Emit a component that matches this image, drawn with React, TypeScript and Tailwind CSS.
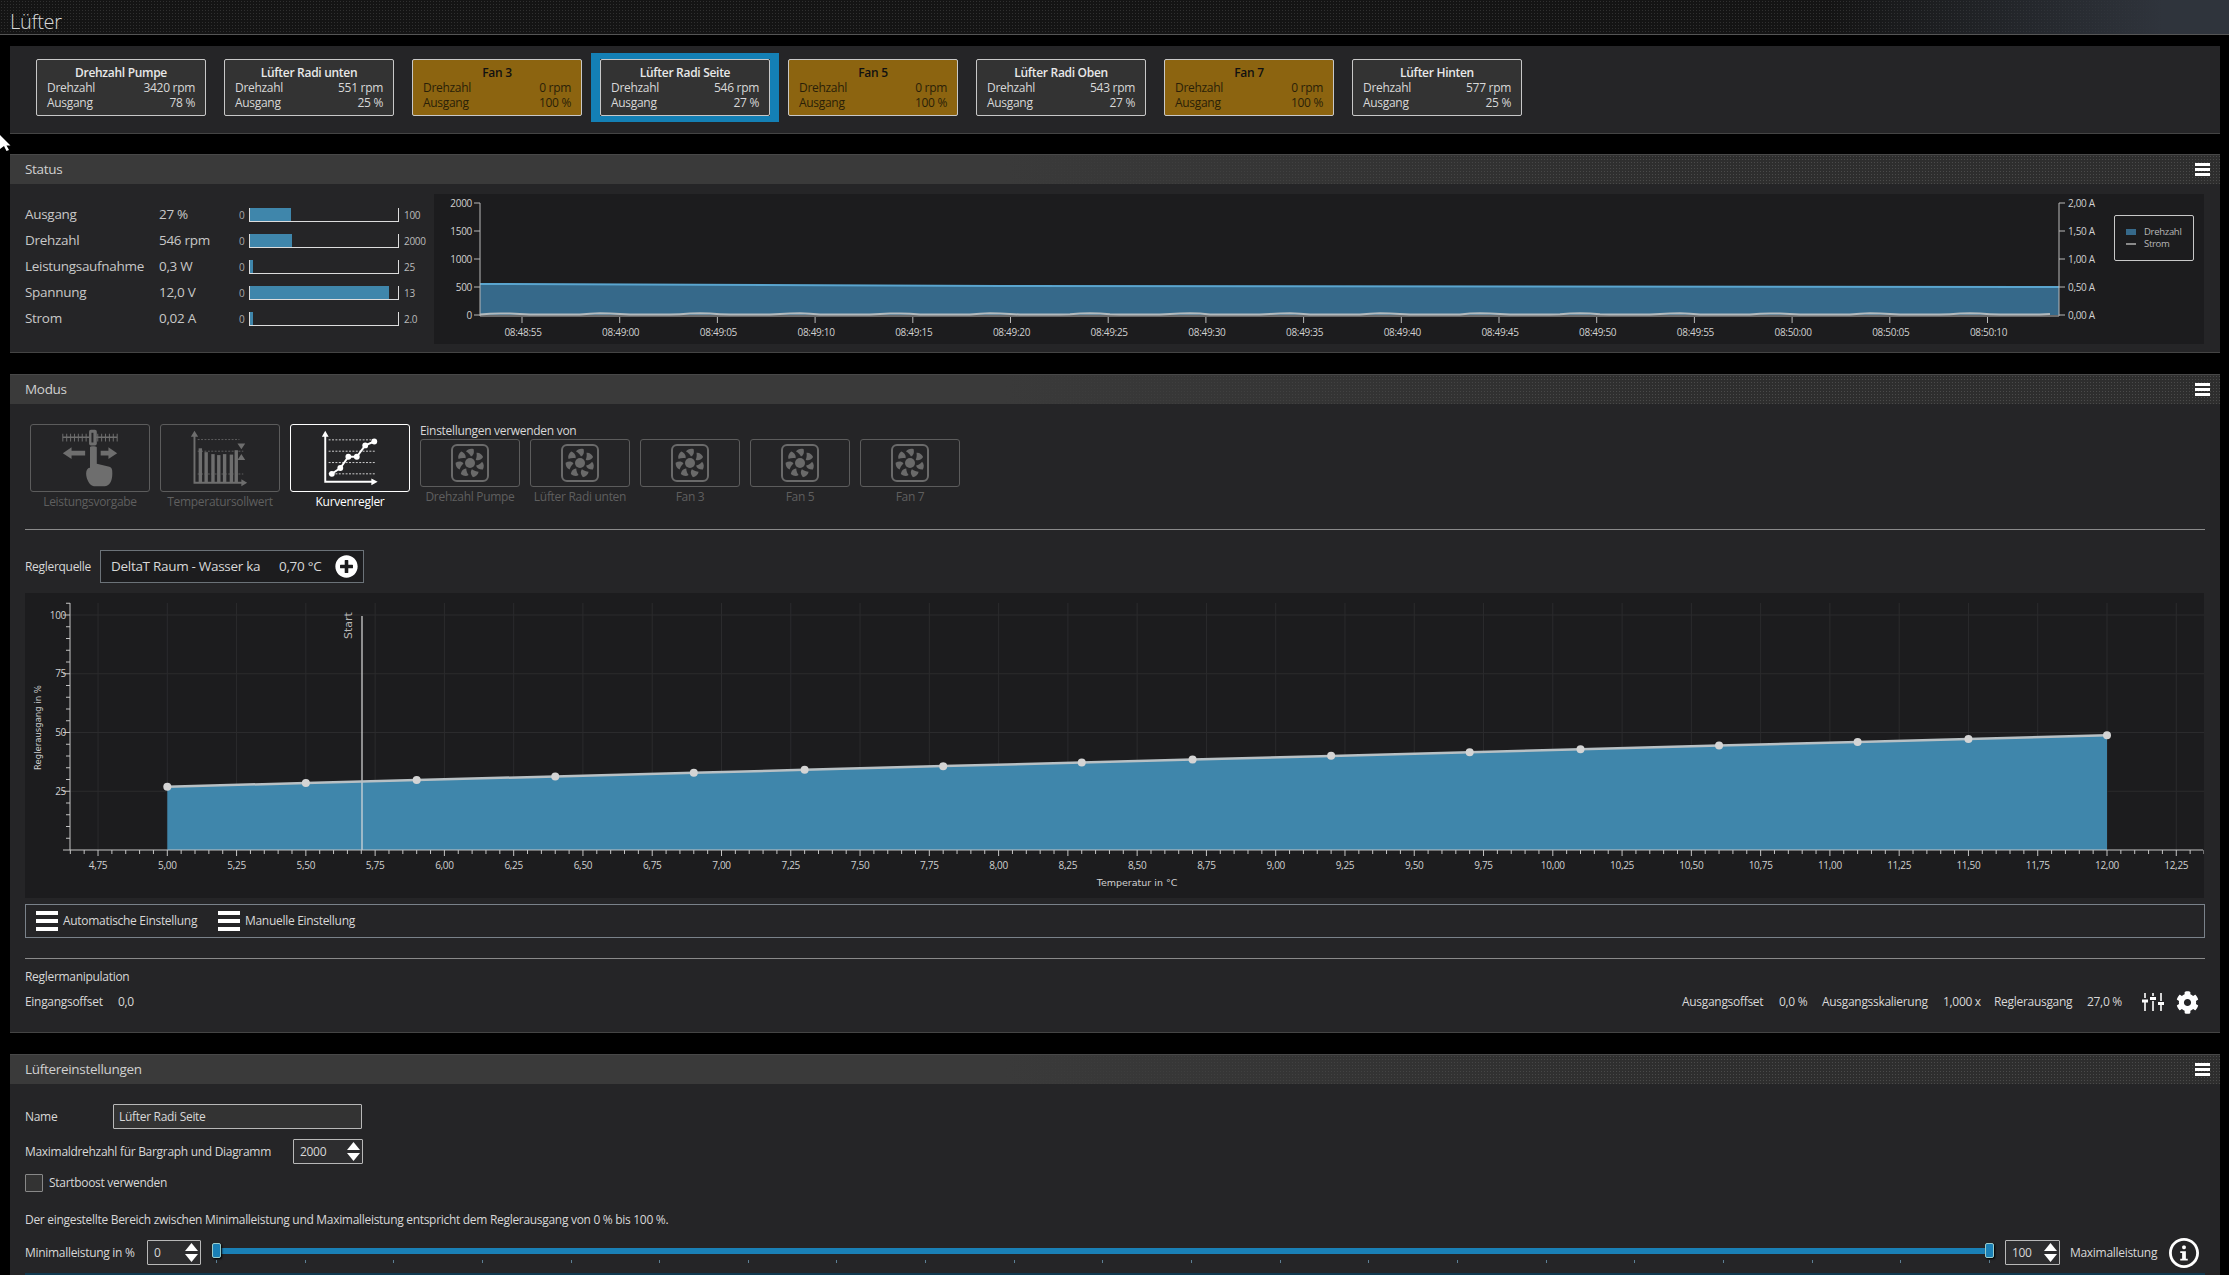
import { FaCog, FaPlusCircle } from 'react-icons/fa';
import { ImInfo } from 'react-icons/im';
import type { ReactNode } from 'react';

const cards = [
  { name: 'Drehzahl Pumpe', rpm: 3420, out: 78 },
  { name: 'Lüfter Radi unten', rpm: 551, out: 25 },
  { name: 'Fan 3', rpm: 0, out: 100, warn: true },
  { name: 'Lüfter Radi Seite', rpm: 546, out: 27, active: true },
  { name: 'Fan 5', rpm: 0, out: 100, warn: true },
  { name: 'Lüfter Radi Oben', rpm: 543, out: 27 },
  { name: 'Fan 7', rpm: 0, out: 100, warn: true },
  { name: 'Lüfter Hinten', rpm: 577, out: 25 },
];

const statusRows = [
  { label: 'Ausgang', value: '27 %', max: '100', fill: 41 },
  { label: 'Drehzahl', value: '546 rpm', max: '2000', fill: 42 },
  { label: 'Leistungsaufnahme', value: '0,3 W', max: '25', fill: 3 },
  { label: 'Spannung', value: '12,0 V', max: '13', fill: 139 },
  { label: 'Strom', value: '0,02 A', max: '2.0', fill: 3 },
];

const timeLabels = [
  '08:48:55', '08:49:00', '08:49:05', '08:49:10', '08:49:15', '08:49:20', '08:49:25', '08:49:30',
  '08:49:35', '08:49:40', '08:49:45', '08:49:50', '08:49:55', '08:50:00', '08:50:05', '08:50:10',
];

const curveX = [5, 5.5, 5.9, 6.4, 6.9, 7.3, 7.8, 8.3, 8.7, 9.2, 9.7, 10.1, 10.6, 11.1, 11.5, 12];
const tempX = (v: number) => 167.3 + (v - 5) * 277.1;
const tempY = (v: number) => 786.7 - (v - 5) * 7.34;

function Bars({ big }: { big?: boolean }) {
  if (big) {
    return (
      <div className="flex h-[20px] w-[22px] flex-col justify-between">
        <div className="h-[4px] bg-white" />
        <div className="h-[4px] bg-white" />
        <div className="h-[4px] bg-white" />
      </div>
    );
  }
  return (
    <div className="flex h-[13px] w-[15px] flex-col justify-between">
      <div className="h-[3px] bg-white" />
      <div className="h-[3px] bg-white" />
      <div className="h-[3px] bg-white" />
    </div>
  );
}

function Panel({ title, className, children }: { title: string; className: string; children: ReactNode }) {
  return (
    <section className={`ml-[10px] w-[2210px] shrink-0 overflow-hidden border-b border-[#444] bg-[#252527] ${className}`}>
      <div className="flex h-[30px] items-center justify-between border-t border-[#484848] pl-[15px] pr-[10px] text-[13.5px] text-[#d0d0d0] [background-image:linear-gradient(90deg,#3a3a3a_45%,transparent_75%),radial-gradient(circle,#4a4a4a_1px,transparent_1px)] [background-size:100%_100%,3px_3px] bg-[#2e2e2e]">
        <span>{title}</span>
        <Bars />
      </div>
      {children}
    </section>
  );
}

function FanCard({ name, rpm, out, warn, active }: { name: string; rpm: number; out: number; warn?: boolean; active?: boolean }) {
  return (
    <div className={`relative flex h-[57px] w-[170px] flex-col rounded-[2px] border border-[#c8c8c8] px-[10px] pt-[5px] text-[12px] leading-[15px] ${warn ? 'bg-[#8c6410] text-[#2a1f08]' : 'bg-[#333] text-[#d8d8d8]'}`}>
      {active && <div className="absolute -inset-x-[10px] -inset-y-[7px] border-x-[9px] border-y-[6px] border-[#1480b5]" />}
      <div className={`text-center font-semibold ${warn ? 'text-[#111]' : 'text-[#e8e8e8]'}`}>{name}</div>
      <div className="flex justify-between">
        <span>Drehzahl</span>
        <span>{rpm} rpm</span>
      </div>
      <div className="flex justify-between">
        <span>Ausgang</span>
        <span>{out} %</span>
      </div>
    </div>
  );
}

function StatusRow({ label, value, max, fill }: { label: string; value: string; max: string; fill: number }) {
  return (
    <div className="flex h-[26px] items-center text-[13.5px] text-[#c8c8c8]">
      <span className="w-[134px] whitespace-nowrap pb-[2px]">{label}</span>
      <span className="w-[80px] whitespace-nowrap pb-[2px]">{value}</span>
      <span className="w-[10px] text-[10px] text-[#aaa]">0</span>
      <div className="h-[14px] w-[150px] border-x border-b border-[#ddd]">
        <div className="h-full bg-[#3f86ab]" style={{ width: fill }} />
      </div>
      <span className="ml-[5px] text-[10px] text-[#bbb]">{max}</span>
    </div>
  );
}

function StatusChart() {
  const wave = Array.from({ length: 158 }, (_, i) => {
    const x = 480 + i * 10;
    return `${x},${(314.6 - Math.max(0, Math.sin((i / 9.77) * Math.PI * 2)) * 1.3).toFixed(1)}`;
  }).join(' ');
  return (
    <div className="relative h-[150px] w-[1770px] bg-[#1c1c1e]">
      <svg viewBox="434 194 1770 150" className="absolute inset-0 h-full w-full">
        <path d="M480 284 L1000 286 L2059 287 L2059 315 L480 315 Z" fill="#36698a" />
        <path d="M480 284 L1000 286 L2059 287" fill="none" stroke="#5aa5cf" strokeWidth="2" />
        <polyline points={wave} fill="none" stroke="#b2babe" strokeWidth="2" />
        <path d="M480 203 V316 H2059 V203" fill="none" stroke="#b8b8b8" strokeWidth="1" />
        {[2000, 1500, 1000, 500, 0].map((v, i) => (
          <g key={v}>
            <line x1="474" x2="480" y1={203 + i * 28} y2={203 + i * 28} stroke="#b8b8b8" />
            <text x="472" y={206.5 + i * 28} textAnchor="end" fontSize="10" fill="#d0d0d0">{v}</text>
            <line x1="2059" x2="2065" y1={203 + i * 28} y2={203 + i * 28} stroke="#b8b8b8" />
            <text x="2068" y={206.5 + i * 28} fontSize="10" fill="#d0d0d0">{['2,00', '1,50', '1,00', '0,50', '0,00'][i]} A</text>
          </g>
        ))}
        {timeLabels.map((t, i) => (
          <g key={t}>
            <line x1={522 + i * 97.7} x2={522 + i * 97.7} y1="317" y2="323" stroke="#b8b8b8" />
            <text x={523 + i * 97.7} y="335.5" textAnchor="middle" fontSize="10" fill="#d0d0d0">{t}</text>
          </g>
        ))}
      </svg>
      <div className="absolute left-[1680px] top-[21px] h-[46px] w-[80px] rounded-[2px] border border-[#c8c8c8] pl-[11px] pt-[10px] text-[9.5px] leading-[12px] text-[#b8b8b8]">
        <div className="flex items-center gap-[8px]">
          <div className="h-[6px] w-[10px] bg-[#36698a]" />
          <span>Drehzahl</span>
        </div>
        <div className="flex items-center gap-[8px]">
          <div className="h-[2px] w-[10px] bg-[#8a8a8a]" />
          <span>Strom</span>
        </div>
      </div>
    </div>
  );
}

function CurveChart() {
  const line = curveX.map((v) => `${tempX(v).toFixed(1)},${tempY(v).toFixed(1)}`).join(' ');
  const xTicks = Array.from({ length: 155 }, (_, i) => ({ v: 4.65 + i * 0.05, major: (i - 2) % 5 === 0 }));
  const yTicks = Array.from({ length: 22 }, (_, i) => i * 5);
  return (
    <svg viewBox="25 593 2179 305" className="ml-[15px] mt-[10px] block h-[305px] w-[2179px] shrink-0 bg-[#1c1c1e]">
      {xTicks.filter((t) => t.major).map((t) => (
        <line key={t.v} x1={tempX(t.v)} x2={tempX(t.v)} y1="603" y2="850" stroke="#2b2b2d" />
      ))}
      {[25, 50, 75, 100].map((v) => (
        <line key={v} x1="70" x2="2204" y1={850 - v * 2.35} y2={850 - v * 2.35} stroke="#2b2b2d" />
      ))}
      <polygon points={`${line} 2107,850 167.3,850`} fill="#3f86ab" />
      <line x1="362" x2="362" y1="616" y2="850" stroke="#dcdcdc" strokeWidth="1.2" />
      <polyline points={line} fill="none" stroke="#b8c0c4" strokeWidth="2.5" />
      {curveX.map((v) => (
        <circle key={v} cx={tempX(v)} cy={tempY(v)} r="4" fill="#d4d4d4" />
      ))}
      <path d="M70 603 V850 H2203" fill="none" stroke="#c4c4c4" />
      {yTicks.map((v) => (
        <line key={v} x1={v % 25 === 0 ? 63 : 66} x2="70" y1={850 - v * 2.35} y2={850 - v * 2.35} stroke="#c4c4c4" />
      ))}
      {[100, 75, 50, 25].map((v) => (
        <text key={v} x="66" y={853.5 - v * 2.35} textAnchor="end" fontSize="10" fill="#d0d0d0">{v}</text>
      ))}
      {xTicks.map((t) => (
        <line key={t.v} x1={tempX(t.v)} x2={tempX(t.v)} y1="850" y2={t.major ? 856 : 854} stroke="#c4c4c4" />
      ))}
      {xTicks.filter((t) => t.major).map((t) => (
        <text key={t.v} x={tempX(t.v)} y="868.5" textAnchor="middle" fontSize="10" fill="#d0d0d0">{t.v.toFixed(2).replace('.', ',')}</text>
      ))}
      <text x="1137" y="886" textAnchor="middle" fontSize="9.5" fill="#d0d0d0" className="[font-family:'DejaVu_Sans',sans-serif] tracking-normal">Temperatur in °C</text>
      <text transform="translate(40.5 770) rotate(-90)" fontSize="8.5" fill="#d0d0d0" className="[font-family:'DejaVu_Sans',sans-serif] tracking-normal">Reglerausgang in %</text>
      <text transform="translate(352 639) rotate(-90)" fontSize="11" fill="#b8b8b8" className="[font-family:'DejaVu_Sans',sans-serif] tracking-normal">Start</text>
    </svg>
  );
}

function PowerIcon() {
  const ticks = Array.from({ length: 15 }, (_, i) => 32 + i * 4);
  return (
    <svg viewBox="0 0 120 68" className="h-full w-full" fill="#6e6e6e" stroke="none">
      <path d="M32 12.7 H88" stroke="#6e6e6e" strokeWidth="1.5" />
      {ticks.map((x) => (
        <path key={x} d={`M${x} 9 V17`} stroke="#6e6e6e" strokeWidth="1" />
      ))}
      <rect x="59" y="5" width="8" height="16" rx="2" />
      <rect x="61.5" y="8" width="2" height="10" fill="#252527" />
      <path d="M32 29 L41 23 V26.5 H55 V31.5 H41 V35 Z" />
      <path d="M88 29 L79 23 V26.5 H71 V31.5 H79 V35 Z" />
      <path d="M60 23 C60 21.5 66 21.5 67 23 V40 L80 43 C83 44 83 47 83 50 C83 58 80 63 75 63 H64 C60 63 56 56 56 50 C56 46 58 44 60 44 Z" />
    </svg>
  );
}

function TempIcon() {
  const bars = [[38, 24], [44, 28], [51, 30], [57, 31], [63, 30], [70, 30.5], [75, 26]];
  return (
    <svg viewBox="0 0 120 68" className="h-full w-full" fill="#6e6e6e">
      {bars.map(([x, y]) => (
        <rect key={x} x={x} y={y} width="3.5" height={59 - y} />
      ))}
      <path d="M37 15 H80 M37 27 H84 M37 50.5 H84" stroke="#6e6e6e" strokeWidth="0.8" strokeDasharray="2 1.5" />
      <path d="M33.7 10 V59.5 H84" fill="none" stroke="#6e6e6e" strokeWidth="2" />
      <path d="M33.7 6 L30 12 H37.5 Z M88 59.5 L82 56 V63 Z" />
      <path d="M78 19 H86 L82 25 Z M78 36 H86 L82 30 Z" />
    </svg>
  );
}

function CurveIcon() {
  return (
    <svg viewBox="0 0 120 68" className="h-full w-full" fill="white">
      <path d="M38 15.3 H87 M38 27 H87 M38 38.7 H87 M38 50.3 H87" stroke="white" strokeWidth="0.8" strokeDasharray="2 1.5" />
      <path d="M34.5 10 V58.5 H84" fill="none" stroke="white" strokeWidth="2" />
      <path d="M34.5 6 L31 12 H38 Z M88.5 58.5 L82 55 V62 Z" />
      <path d="M41.3 50.3 L50 44.3 L58.3 32.7 L67 32.7 L75.7 21 L85 17" fill="none" stroke="white" strokeWidth="2" />
      {[[41.3, 50.3], [50, 44.3], [58.3, 32.7], [67, 32.7], [75.7, 21], [85, 17]].map(([x, y]) => (
        <circle key={x} cx={x} cy={y} r="3" />
      ))}
    </svg>
  );
}

function FanIcon() {
  const blades = [0, 51.4, 102.8, 154.3, 205.7, 257.1, 308.6];
  return (
    <svg viewBox="0 0 38 38" className="h-[38px] w-[38px]" fill="#6a6a6a">
      <rect x="1" y="1" width="36" height="36" rx="5" fill="none" stroke="#6a6a6a" strokeWidth="2" />
      <circle cx="19" cy="19" r="5" />
      {blades.map((a) => (
        <path key={a} d="M20 12.5 C22.5 11.5 23.5 8.5 22.5 5 C19.5 4.3 16.5 5 15 7.5 C16.8 8.5 18.8 10 20 12.5 Z" transform={`rotate(${a} 19 19)`} />
      ))}
    </svg>
  );
}

function ModeButton({ label, on, children }: { label: string; on?: boolean; children: ReactNode }) {
  return (
    <div className="w-[120px]">
      <div className={`h-[68px] rounded-[3px] border ${on ? 'border-white' : 'border-[#5c5c5c]'}`}>{children}</div>
      <div className={`mt-[2px] text-center text-[12px] leading-[16px] ${on ? 'text-white' : 'text-[#5f5f5f]'}`}>{label}</div>
    </div>
  );
}

function SpinArrows() {
  return (
    <svg viewBox="0 0 13 25" className="h-[25px] w-[13px]" fill="white">
      <path d="M6.5 3 L13 11 H0 Z M6.5 22 L13 14 H0 Z" />
    </svg>
  );
}

function SpinInput({ value, width }: { value: string; width: string }) {
  return (
    <div className={`flex h-[25px] shrink-0 items-center justify-between rounded-[1px] border border-[#b8b8b8] bg-[#2d2d2f] pl-[6px] pr-[2px] text-[12px] text-[#d8d8d8] ${width}`}>
      <span>{value}</span>
      <SpinArrows />
    </div>
  );
}

function SliderIcon() {
  return (
    <svg viewBox="0 0 22 18" className="h-[18px] w-[22px]" stroke="white" strokeWidth="1.6">
      <path d="M3 0 V5 M3 9 V18 M11 0 V3 M11 8 V18 M19 0 V8 M19 12 V18" />
      <path d="M0 8 H6 M8 5.5 H14 M16 10.5 H22" strokeWidth="3" />
    </svg>
  );
}

export default function App() {
  return (
    <div className="relative flex h-[1275px] w-[2229px] flex-col overflow-hidden bg-black text-[12px] tracking-[-0.3px] text-[#d8d8d8] [font-family:'Open_Sans',sans-serif]">
      <header className="flex h-[35px] shrink-0 items-center border-b border-[#555] pl-[10px] pt-[9px] text-[20px] font-light text-[#d8d8d8] [background-image:linear-gradient(90deg,transparent_82%,#2f343c_97%),radial-gradient(circle,#303030_1px,transparent_1px)] [background-size:100%_100%,3px_3px] bg-[#141414]">
        Lüfter
      </header>

      <section className="ml-[10px] mt-[11px] flex h-[88px] w-[2210px] shrink-0 gap-[18px] border-b border-[#444] bg-[#252527] pl-[26px] pt-[13px]">
        {cards.map((c) => (
          <FanCard key={c.name} {...c} />
        ))}
      </section>

      <Panel title="Status" className="mt-[20px] h-[199px]">
        <div className="flex pl-[15px] pt-[10px]">
          <div className="w-[409px] pt-[8px]">
            {statusRows.map((r) => (
              <StatusRow key={r.label} {...r} />
            ))}
          </div>
          <StatusChart />
        </div>
      </Panel>

      <Panel title="Modus" className="mt-[21px] h-[659px]">
        <div className="flex h-[125px] gap-[10px] pl-[20px] pt-[20px]">
          <ModeButton label="Leistungsvorgabe"><PowerIcon /></ModeButton>
          <ModeButton label="Temperatursollwert"><TempIcon /></ModeButton>
          <ModeButton label="Kurvenregler" on><CurveIcon /></ModeButton>
          <div>
            <div className="h-[15px] whitespace-nowrap text-[12px] leading-[13px] text-[#d8d8d8]">Einstellungen verwenden von</div>
            <div className="flex gap-[10px]">
              {['Drehzahl Pumpe', 'Lüfter Radi unten', 'Fan 3', 'Fan 5', 'Fan 7'].map((n) => (
                <div key={n} className="w-[100px]">
                  <div className="flex h-[48px] items-center justify-center rounded-[3px] border border-[#5c5c5c]">
                    <FanIcon />
                  </div>
                  <div className="mt-[2px] whitespace-nowrap text-center text-[12px] leading-[16px] text-[#5f5f5f]">{n}</div>
                </div>
              ))}
            </div>
          </div>
        </div>
        <div className="mx-[15px] border-t border-[#8a8a8a]" />
        <div className="ml-[15px] mt-[20px] flex h-[33px] items-center">
          <span className="w-[75px]">Reglerquelle</span>
          <div className="flex h-[33px] w-[264px] items-center border border-[#6b7278] bg-[#1c1c1e] pl-[10px] text-[13.5px] text-[#d8d8d8]">
            <span className="w-[168px] whitespace-nowrap">DeltaT Raum - Wasser ka</span>
            <span className="w-[56px] whitespace-nowrap">0,70 °C</span>
            <FaPlusCircle className="h-[23px] w-[23px] text-white" />
          </div>
        </div>
        <CurveChart />
        <div className="mx-[15px] mt-[6px] flex h-[34px] items-center border border-[#7a828a] pl-[10px] text-[12px]">
          <Bars big />
          <span className="ml-[5px] w-[155px] whitespace-nowrap">Automatische Einstellung</span>
          <Bars big />
          <span className="ml-[5px] whitespace-nowrap">Manuelle Einstellung</span>
        </div>
        <div className="mx-[15px] mt-[20px] border-t border-[#8a8a8a]" />
        <div className="ml-[15px] mt-[9px] h-[18px] leading-[18px]">Reglermanipulation</div>
        <div className="mx-[15px] mt-[4px] flex h-[24px] items-center justify-between pr-[6px]">
          <div className="flex">
            <span className="w-[93px]">Eingangsoffset</span>
            <span>0,0</span>
          </div>
          <div className="flex items-center whitespace-nowrap">
            <span className="w-[97px]">Ausgangsoffset</span>
            <span className="w-[43px]">0,0 %</span>
            <span className="w-[121px]">Ausgangsskalierung</span>
            <span className="w-[51px]">1,000 x</span>
            <span className="w-[93px]">Reglerausgang</span>
            <span className="w-[55px]">27,0 %</span>
            <SliderIcon />
            <FaCog className="ml-[12px] h-[23px] w-[23px] text-white" />
          </div>
        </div>
      </Panel>

      <Panel title="Lüftereinstellungen" className="mt-[21px] grow !border-b-0">
        <div className="flex flex-col px-[15px] pt-[20px]">
          <div className="flex h-[25px] items-center">
            <span className="w-[88px]">Name</span>
            <div className="flex h-[25px] w-[249px] items-center rounded-[1px] border border-[#b8b8b8] bg-[#333] pl-[5px]">Lüfter Radi Seite</div>
          </div>
          <div className="mt-[10px] flex h-[25px] items-center">
            <span className="w-[268px] whitespace-nowrap">Maximaldrehzahl für Bargraph und Diagramm</span>
            <SpinInput value="2000" width="w-[70px]" />
          </div>
          <div className="mt-[10px] flex h-[18px] items-center">
            <div className="h-[18px] w-[18px] rounded-[1px] border border-[#888] bg-[#333]" />
            <span className="ml-[6px]">Startboost verwenden</span>
          </div>
          <div className="mt-[19px] h-[18px] whitespace-nowrap leading-[18px]">
            Der eingestellte Bereich zwischen Minimalleistung und Maximalleistung entspricht dem Reglerausgang von 0 % bis 100 %.
          </div>
          <div className="mr-[6px] mt-[11px] flex h-[25px] items-center">
            <span className="w-[122px] whitespace-nowrap">Minimalleistung in %</span>
            <SpinInput value="0" width="w-[54px]" />
            <div className="relative mx-[11px] h-[25px] grow">
              <div className="absolute inset-x-0 top-[8px] h-[6px] bg-[#1a80b6]" />
              <div className="absolute left-[4px] right-[4px] top-[20px] flex justify-between">
                {Array.from({ length: 21 }, (_, i) => (
                  <div key={i} className="h-[3px] w-px bg-[#5c7f94]" />
                ))}
              </div>
              <div className="absolute left-0 top-[3px] h-[15px] w-[9px] rounded-[2px] border border-[#9cc] bg-[#1a80b6] shadow-[1px_1px_2px_#000]" />
              <div className="absolute right-0 top-[3px] h-[15px] w-[9px] rounded-[2px] border border-[#9cc] bg-[#1a80b6] shadow-[1px_1px_2px_#000]" />
            </div>
            <SpinInput value="100" width="w-[55px]" />
            <span className="ml-[10px] w-[99px] whitespace-nowrap">Maximalleistung</span>
            <ImInfo className="h-[30px] w-[30px] shrink-0 text-white" />
          </div>
          <div className="mt-[8px] h-[2px] bg-[#123a50]" />
        </div>
      </Panel>

      <svg viewBox="0 0 11 16" className="absolute left-0 top-[135px] h-[16px] w-[11px]">
        <path d="M0 0 L10.5 10.5 H6.5 L9 15 L6.5 16 L4 11 L0 14 Z" fill="white" />
      </svg>
    </div>
  );
}
